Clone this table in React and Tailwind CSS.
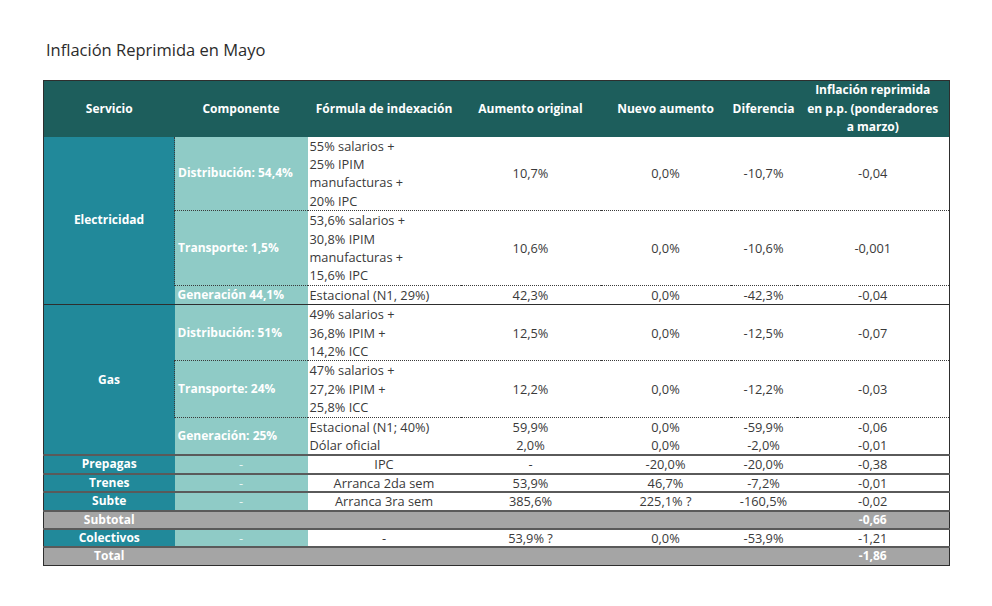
export default function App() {
  const svc = "bg-[#21899a] text-white font-bold text-center align-middle text-[12px]";
  const comp = "bg-[#8fcbc6] text-white font-bold text-left align-middle pl-[3px] text-[12px]";
  const compDash = "bg-[#8fcbc6] text-[#e8f5f4] text-center align-middle";
  const fml = "text-left align-top pl-[2px] text-[#3a3a3a]";
  const num = "text-center align-middle text-[#3a3a3a]";
  const dot = "border-t border-dotted border-t-[#3a3a3a]";
  const solid = "border-t border-solid border-t-[#2e2e2e]";
  const thick = "border-t-2 border-solid border-t-[#5a5a5a]";

  return (
    <div className="w-[992px] h-[606px] bg-white" style={{ fontFamily: '"Open Sans", "Liberation Sans", sans-serif' }}>
      <div className="pt-[39px] pl-[46px] text-[16.5px] leading-[22px] text-[#2b2b2b]">Inflación Reprimida en Mayo</div>
      <div className="pl-[43px] pt-[19px]">
        <table className="table-fixed border-collapse w-[906px] text-[12.8px] leading-[18.4px] border border-[#2e2e2e]">
          <colgroup>
            <col className="w-[131px]" />
            <col className="w-[133px]" />
            <col className="w-[153px]" />
            <col className="w-[140px]" />
            <col className="w-[130px]" />
            <col className="w-[66px]" />
            <col className="w-[153px]" />
          </colgroup>
          <thead>
            <tr className="bg-[#1d5e5c] text-white font-bold h-[56px] text-[12px]">
              <th className="font-bold">Servicio</th>
              <th className="font-bold">Componente</th>
              <th className="font-bold">Fórmula de indexación</th>
              <th className="font-bold">Aumento original</th>
              <th className="font-bold">Nuevo aumento</th>
              <th className="font-bold">Diferencia</th>
              <th className="font-bold leading-[18.5px]">
                Inflación reprimida
                <br />
                en p.p. (ponderadores
                <br />
                a marzo)
              </th>
            </tr>
          </thead>
          <tbody>
            <tr>
              <td rowSpan={3} className={svc}>Electricidad</td>
              <td className={`${comp} border-l border-dotted border-l-[#3a3a3a]`}>Distribución: 54,4%</td>
              <td className={fml}>55% salarios +<br />25% IPIM<br />manufacturas +<br />20% IPC</td>
              <td className={num}>10,7%</td>
              <td className={num}>0,0%</td>
              <td className={num}>-10,7%</td>
              <td className={num}>-0,04</td>
            </tr>
            <tr>
              <td className={`${comp} ${dot} border-l border-dotted border-l-[#3a3a3a]`}>Transporte: 1,5%</td>
              <td className={`${fml} ${dot}`}>53,6% salarios +<br />30,8% IPIM<br />manufacturas +<br />15,6% IPC</td>
              <td className={`${num} ${dot}`}>10,6%</td>
              <td className={`${num} ${dot}`}>0,0%</td>
              <td className={`${num} ${dot}`}>-10,6%</td>
              <td className={`${num} ${dot}`}>-0,001</td>
            </tr>
            <tr>
              <td className={`${comp} ${dot}`}>Generación 44,1%</td>
              <td className={`${fml} ${dot}`}>Estacional (N1, 29%)</td>
              <td className={`${num} ${dot}`}>42,3%</td>
              <td className={`${num} ${dot}`}>0,0%</td>
              <td className={`${num} ${dot}`}>-42,3%</td>
              <td className={`${num} ${dot}`}>-0,04</td>
            </tr>
            <tr>
              <td rowSpan={4} className={`${svc} ${solid}`}>Gas</td>
              <td className={`${comp} ${solid}`}>Distribución: 51%</td>
              <td className={`${fml} ${solid}`}>49% salarios +<br />36,8% IPIM +<br />14,2% ICC</td>
              <td className={`${num} ${solid}`}>12,5%</td>
              <td className={`${num} ${solid}`}>0,0%</td>
              <td className={`${num} ${solid}`}>-12,5%</td>
              <td className={`${num} ${solid}`}>-0,07</td>
            </tr>
            <tr>
              <td className={`${comp} ${dot} border-l border-dotted border-l-[#3a3a3a]`}>Transporte: 24%</td>
              <td className={`${fml} ${dot}`}>47% salarios +<br />27,2% IPIM +<br />25,8% ICC</td>
              <td className={`${num} ${dot}`}>12,2%</td>
              <td className={`${num} ${dot}`}>0,0%</td>
              <td className={`${num} ${dot}`}>-12,2%</td>
              <td className={`${num} ${dot}`}>-0,03</td>
            </tr>
            <tr>
              <td rowSpan={2} className={`${comp} ${dot}`}>Generación: 25%</td>
              <td className={`${fml} ${dot}`}>Estacional (N1; 40%)</td>
              <td className={`${num} ${dot}`}>59,9%</td>
              <td className={`${num} ${dot}`}>0,0%</td>
              <td className={`${num} ${dot}`}>-59,9%</td>
              <td className={`${num} ${dot}`}>-0,06</td>
            </tr>
            <tr>
              <td className={fml}>Dólar oficial</td>
              <td className={num}>2,0%</td>
              <td className={num}>0,0%</td>
              <td className={num}>-2,0%</td>
              <td className={num}>-0,01</td>
            </tr>
            {[
              ["Prepagas", "IPC", "-", "-20,0%", "-20,0%", "-0,38"],
              ["Trenes", "Arranca 2da sem", "53,9%", "46,7%", "-7,2%", "-0,01"],
              ["Subte", "Arranca 3ra sem", "385,6%", "225,1% ?", "-160,5%", "-0,02"],
            ].map((r) => (
              <tr key={r[0]} className="leading-[16.4px]">
                <td className={`${svc} ${thick}`}>{r[0]}</td>
                <td className={`${compDash} ${thick}`}>-</td>
                <td className={`${num} ${thick}`}>{r[1]}</td>
                <td className={`${num} ${thick}`}>{r[2]}</td>
                <td className={`${num} ${thick}`}>{r[3]}</td>
                <td className={`${num} ${thick}`}>{r[4]}</td>
                <td className={`${num} ${thick}`}>{r[5]}</td>
              </tr>
            ))}
            <tr className="bg-[#a5a5a5] text-white font-bold text-[12px] leading-[16.4px]">
              <td className={`text-center ${thick}`}>Subtotal</td>
              <td colSpan={5} className={thick}></td>
              <td className={`text-center ${thick}`}>-0,66</td>
            </tr>
            <tr className="leading-[16.4px]">
              <td className={`${svc} ${thick}`}>Colectivos</td>
              <td className={`${compDash} ${thick}`}>-</td>
              <td className={`${num} ${thick}`}>-</td>
              <td className={`${num} ${thick}`}>53,9% ?</td>
              <td className={`${num} ${thick}`}>0,0%</td>
              <td className={`${num} ${thick}`}>-53,9%</td>
              <td className={`${num} ${thick}`}>-1,21</td>
            </tr>
            <tr className="bg-[#a5a5a5] text-white font-bold text-[12px] leading-[16.4px]">
              <td className={`text-center ${thick}`}>Total</td>
              <td colSpan={5} className={thick}></td>
              <td className={`text-center ${thick}`}>-1,86</td>
            </tr>
          </tbody>
        </table>
      </div>
    </div>
  );
}
